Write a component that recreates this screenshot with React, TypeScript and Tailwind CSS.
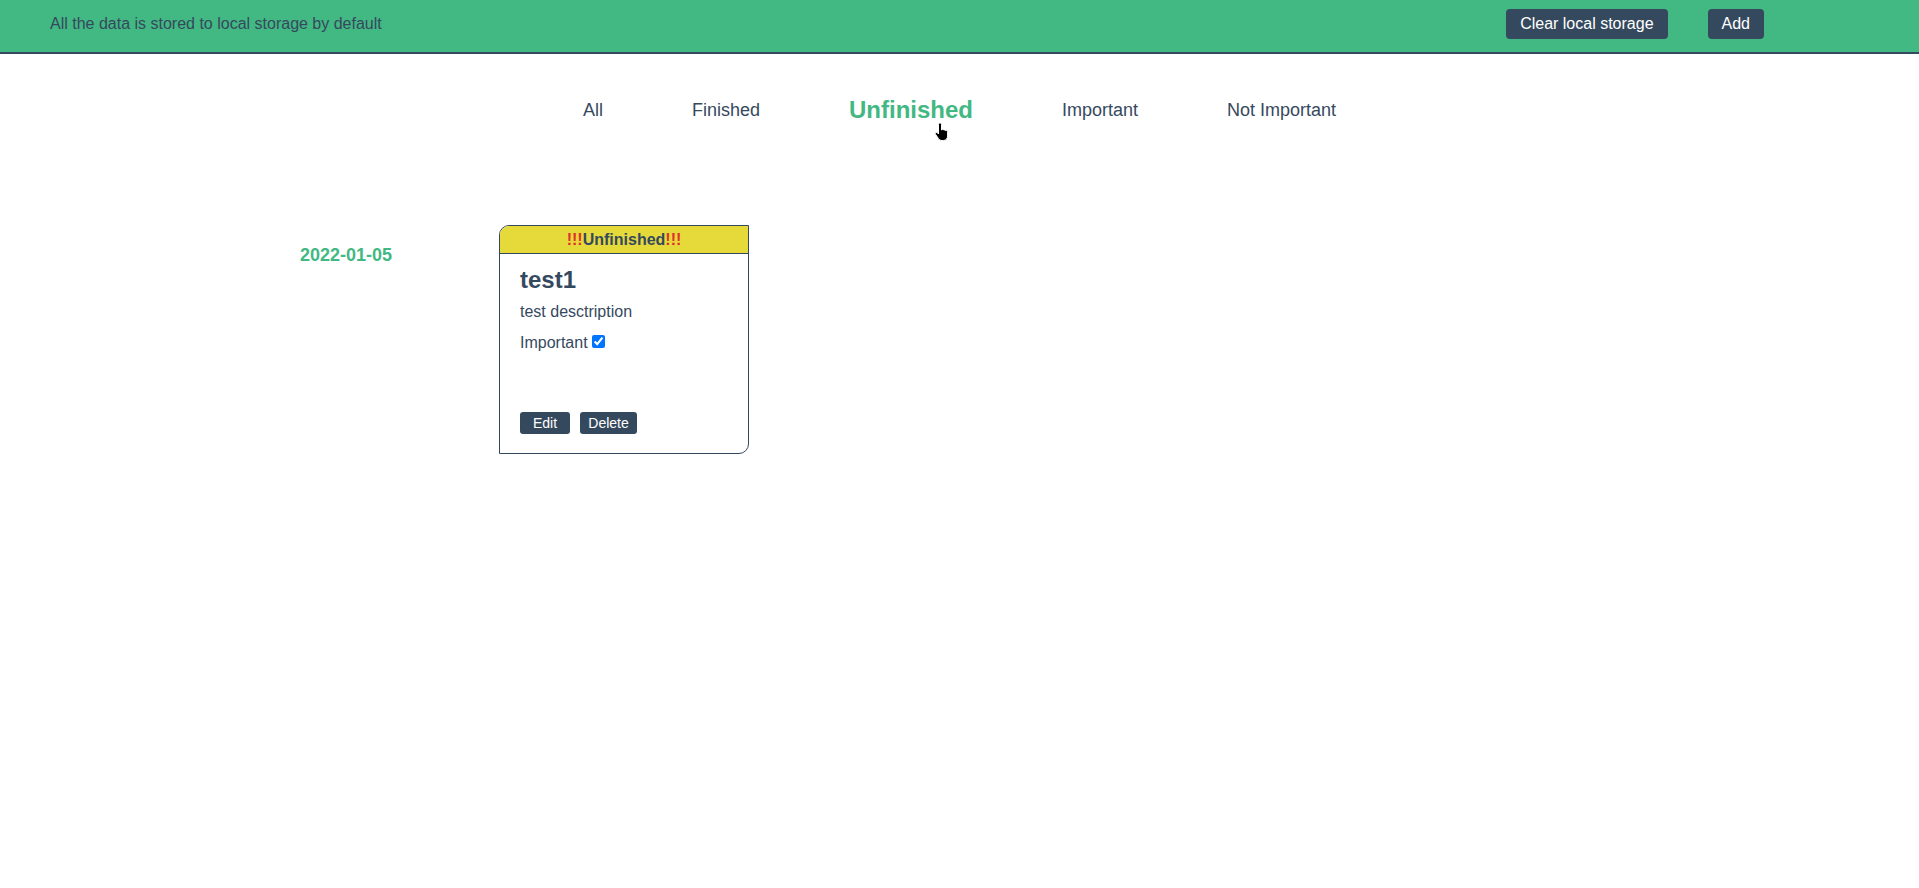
import React from "react";

export default function App() {
  const tabs = ["All", "Finished", "Unfinished", "Important", "Not Important"];
  return (
    <div className="relative min-h-[888px] bg-white font-['Liberation_Sans',Arial,sans-serif] text-[#35495e]">
      <header className="flex h-[54px] items-center justify-between border-b-2 border-[#35495e] bg-[#42b883] pb-[4px] pl-[50px] pr-[155px]">
        <p className="text-[16px] leading-[18px] text-[#35495e]">All the data is stored to local storage by default</p>
        <div className="flex items-center gap-[40px]">
          <button className="h-[30px] rounded-[4px] bg-[#35495e] px-[14px] text-[16px] leading-[18px] text-white">Clear local storage</button>
          <button className="h-[30px] rounded-[4px] bg-[#35495e] px-[14px] text-[16px] leading-[18px] text-white">Add</button>
        </div>
      </header>

      <nav className="mt-[41px] flex h-[30px] items-center justify-center gap-[89px]">
        {tabs.map((t) =>
          t === "Unfinished" ? (
            <span key={t} className="text-[24px] font-bold leading-[28px] text-[#42b883]">{t}</span>
          ) : (
            <span key={t} className="text-[18px] leading-[21px] text-[#35495e]">{t}</span>
          )
        )}
      </nav>

      <main className="mt-[100px] flex pl-[300px]">
        <div className="w-[199px] pt-[20px] text-[18px] font-bold leading-[21px] text-[#42b883]">2022-01-05</div>
        <div className="flex h-[229px] w-[250px] flex-col overflow-hidden rounded-tl-[10px] rounded-br-[10px] border border-[#35495e]">
          <div className="flex h-[28px] items-center justify-center border-b border-[#35495e] bg-[#e6d93a] text-[16px] font-bold leading-[18px] text-[#35495e]">
            <span className="text-[#e0302e]">!!!</span>Unfinished<span className="text-[#e0302e]">!!!</span>
          </div>
          <div className="flex flex-col px-[20px] pt-[12px]">
            <h3 className="text-[24px] font-bold leading-[28px] text-[#35495e]">test1</h3>
            <p className="mt-[9px] text-[16px] leading-[18px]">test desctription</p>
            <label className="mt-[13px] flex items-center text-[16px] leading-[18px]">
              Important
              <input type="checkbox" checked readOnly className="ml-[4px] mt-[-3px] h-[13px] w-[13px] accent-[#0075ff]" />
            </label>
            <div className="mt-[60px] flex gap-[10px]">
              <button className="h-[22px] w-[50px] rounded-[3px] bg-[#35495e] text-[14px] leading-[16px] text-white">Edit</button>
              <button className="h-[22px] w-[57px] rounded-[3px] bg-[#35495e] text-[14px] leading-[16px] text-white">Delete</button>
            </div>
          </div>
        </div>
      </main>

      <svg className="pointer-events-none absolute left-[933px] top-[122px]" width="17" height="20" viewBox="0 0 15 20">
        <path
          d="M6 1 C6.8 1 7.5 1.6 7.5 2.5 V8 L8 7.6 C8.6 7.2 9.6 7.4 9.9 8.1 C10.5 7.7 11.5 7.9 11.8 8.7 C12.4 8.4 13.5 8.7 13.6 9.6 V14 C13.6 16.5 12 18.5 9.5 18.5 H8 C6.3 18.5 5.2 17.7 4.3 16.4 L1.6 12.4 C1.1 11.7 1.4 10.8 2.1 10.5 C2.7 10.2 3.4 10.4 3.8 11 L4.5 12 V2.5 C4.5 1.6 5.2 1 6 1 Z"
          fill="#000"
          stroke="#fff"
          strokeWidth="1"
        />
      </svg>
    </div>
  );
}
